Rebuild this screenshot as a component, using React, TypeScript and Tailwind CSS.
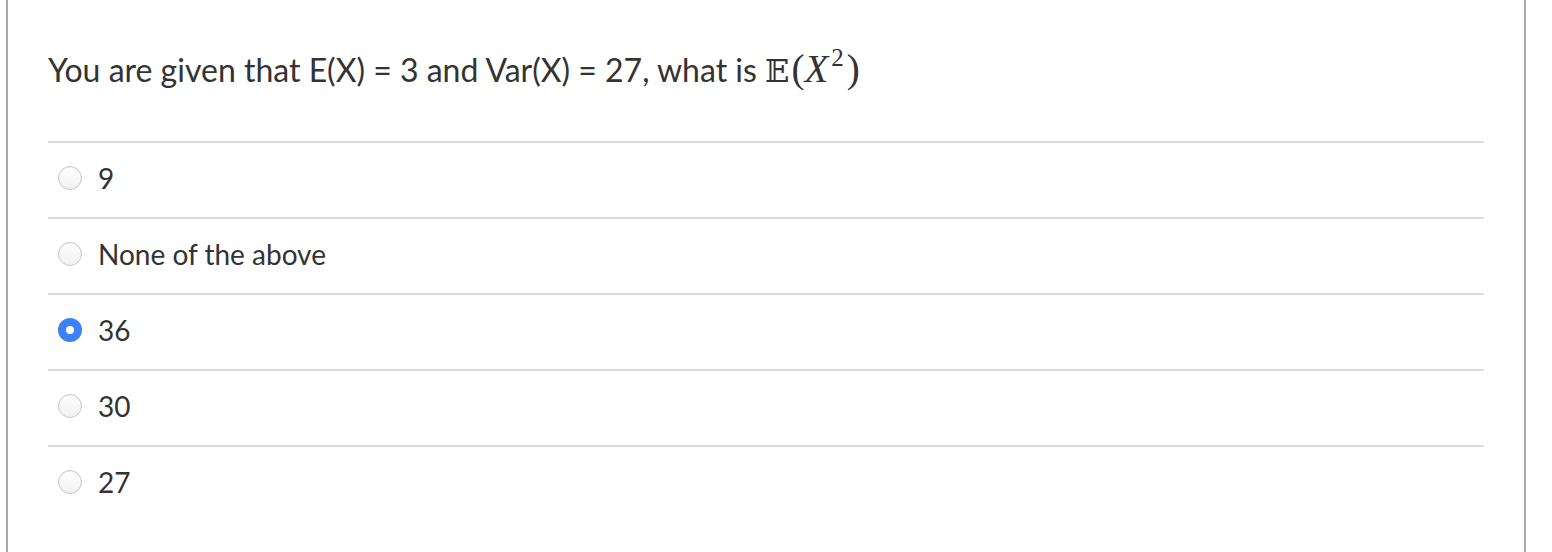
import React from 'react';

const options = [
  { label: '9', selected: false },
  { label: 'None of the above', selected: false },
  { label: '36', selected: true },
  { label: '30', selected: false },
  { label: '27', selected: false },
];

const Radio: React.FC<{ selected: boolean }> = ({ selected }) =>
  selected ? (
    <span className="flex h-6 w-6 shrink-0 items-center justify-center rounded-full bg-[#3c82f6]">
      <span className="h-2 w-2 rounded-full bg-white" />
    </span>
  ) : (
    <span className="h-6 w-6 shrink-0 rounded-full border border-[#c8c8c8] bg-gradient-to-b from-white to-[#f1f1f1] shadow-[inset_0_1px_1px_rgba(0,0,0,0.06)]" />
  );

export default function App() {
  return (
    <div className="h-[552px] w-full overflow-hidden bg-white font-['Lato','Liberation_Sans',sans-serif] text-[#333]">
      <div className="ml-[6px] h-full w-[1520px] border-x-2 border-[#a9a9a9] px-10">
        <div className="flex h-[141px] items-center pb-[2px] text-[32px]">
          <span>You are given that E(X) = 3 and Var(X) = 27, what is&nbsp;</span>
          <span className="flex items-baseline font-['Liberation_Serif','DejaVu_Serif',serif] text-[39px]">
            <span className="font-['DejaVu_Serif',serif] text-[32px]">𝔼</span>
            <span className="ml-[2px]">(</span>
            <span className="italic">X</span>
            <span className="relative -top-[16px] ml-[3px] text-[25px]">2</span>
            <span className="ml-[3px]">)</span>
          </span>
        </div>
        {options.map((o, i) => (
          <div
            key={i}
            className="flex h-[76px] items-center gap-4 border-t-2 border-[#dcdcdc] pb-[4px] pl-[10px] text-[28px]"
          >
            <Radio selected={o.selected} />
            <span>{o.label}</span>
          </div>
        ))}
      </div>
    </div>
  );
}
